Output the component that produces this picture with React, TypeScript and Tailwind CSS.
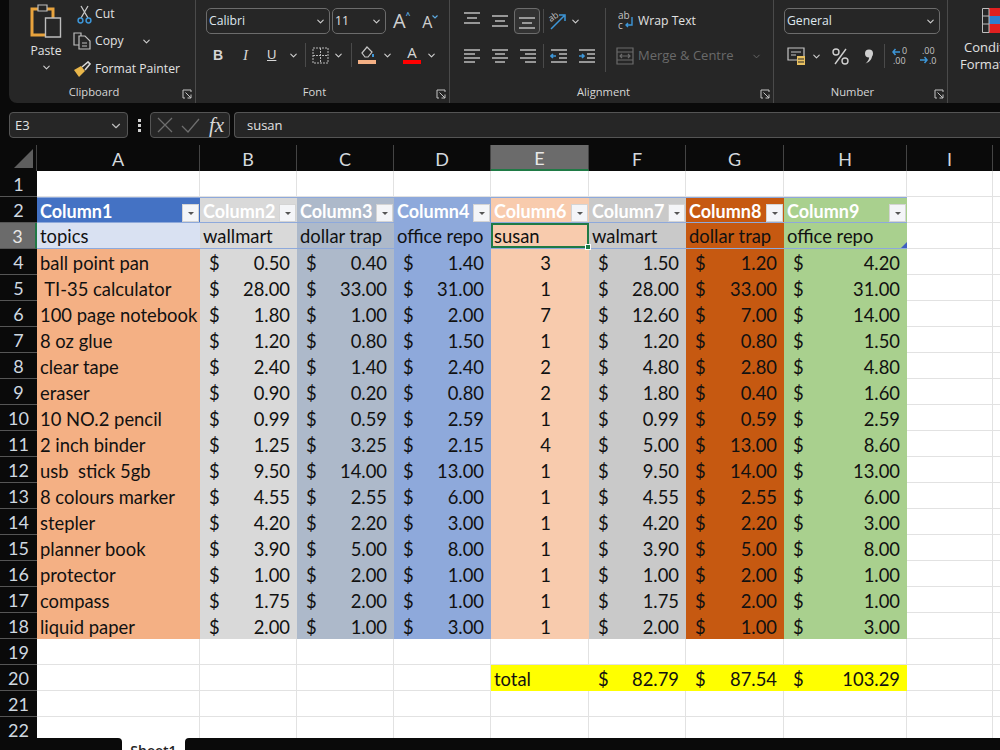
import React from "react";
import { ChevronDown } from "lucide-react";

const widths = [163, 97, 97, 97, 98, 97, 98, 123, 86, 60];
const letters = ["A", "B", "C", "D", "E", "F", "G", "H", "I", "J"];

const colBg = [
  "bg-[#f4b084]",
  "bg-[#d9d9d9]",
  "bg-[#adb9ca]",
  "bg-[#8ea9db]",
  "bg-[#f8cbad]",
  "bg-[#c9c9c9]",
  "bg-[#c65911]",
  "bg-[#a9d08e]",
];

const heads = ["Column1", "Column2", "Column3", "Column4", "Column6", "Column7", "Column8", "Column9"];
const sub = ["topics", "wallmart", "dollar trap", "office repo", "susan", "walmart", "dollar trap", "office repo"];

const rows: string[][] = [
  ["ball point pan", "0.50", "0.40", "1.40", "3", "1.50", "1.20", "4.20"],
  [" TI-35 calculator", "28.00", "33.00", "31.00", "1", "28.00", "33.00", "31.00"],
  ["100 page notebook", "1.80", "1.00", "2.00", "7", "12.60", "7.00", "14.00"],
  ["8 oz glue", "1.20", "0.80", "1.50", "1", "1.20", "0.80", "1.50"],
  ["clear tape", "2.40", "1.40", "2.40", "2", "4.80", "2.80", "4.80"],
  ["eraser", "0.90", "0.20", "0.80", "2", "1.80", "0.40", "1.60"],
  ["10 NO.2 pencil", "0.99", "0.59", "2.59", "1", "0.99", "0.59", "2.59"],
  ["2 inch binder", "1.25", "3.25", "2.15", "4", "5.00", "13.00", "8.60"],
  ["usb  stick 5gb", "9.50", "14.00", "13.00", "1", "9.50", "14.00", "13.00"],
  ["8 colours marker", "4.55", "2.55", "6.00", "1", "4.55", "2.55", "6.00"],
  ["stepler", "4.20", "2.20", "3.00", "1", "4.20", "2.20", "3.00"],
  ["planner book", "3.90", "5.00", "8.00", "1", "3.90", "5.00", "8.00"],
  ["protector", "1.00", "2.00", "1.00", "1", "1.00", "2.00", "1.00"],
  ["compass", "1.75", "2.00", "1.00", "1", "1.75", "2.00", "1.00"],
  ["liquid paper", "2.00", "1.00", "3.00", "1", "2.00", "1.00", "3.00"],
];

const Cell = ({ i, className = "", children }: { i: number; className?: string; children?: React.ReactNode }) => (
  <div
    style={{ width: widths[i] }}
    className={`h-[26px] shrink-0 pt-[3px] border-r border-b border-[#e2e2e2] flex items-center overflow-hidden whitespace-pre ${className}`}
  >
    {children}
  </div>
);

const Money = ({ v }: { v: string }) => (
  <div className="flex w-full justify-between pl-[9px] pr-[7px]">
    <span>$</span>
    <span>{v}</span>
  </div>
);

const RowNum = ({ n, active }: { n: number; active?: boolean }) => (
  <div
    className={`w-[37px] h-[26px] shrink-0 pt-[2px] flex items-center justify-center border-b border-[#555] text-[18px] ${
      active ? "bg-[#6b6b6b] text-[#e8e8e8] border-r-2 border-r-[#1f7a45]" : "bg-[#0a0a0a] text-[#cfd8e0]"
    }`}
  >
    {n}
  </div>
);

const Row = ({ n, active, children }: { n: number; active?: boolean; children: React.ReactNode }) => (
  <div className="flex h-[26px]">
    <RowNum n={n} active={active} />
    {children}
  </div>
);

const BlankCells = ({ from = 0, to }: { from?: number; to?: number }) => (
  <>
    {widths.slice(from, to).map((_, i) => (
      <Cell key={i} i={i + from} />
    ))}
  </>
);

const FilterBtn = () => (
  <div className="absolute right-[1px] top-[6px] w-[17px] h-[18px] bg-[#f4f5f8] border border-[#d4d4d4] flex items-center justify-center">
    <div className="w-0 h-0 border-l-[3px] border-r-[3px] border-t-[3px] border-l-transparent border-r-transparent border-t-[#555]" />
  </div>
);

const AlignIcon = ({ lines }: { lines: [number, number][] }) => (
  <svg width="18" height="16" viewBox="0 0 18 16" stroke="#bdbdbd" strokeWidth="1.5">
    {lines.map(([a, b], i) => (
      <path key={i} d={`M${a} ${2 + i * 4}H${b}`} />
    ))}
  </svg>
);

const VAlign = ({ y }: { y: number }) => (
  <svg width="18" height="18" viewBox="0 0 18 18" stroke="#bdbdbd" strokeWidth="1.5">
    <path d={`M1 ${y}H17M4 ${y + 5}H14M1 ${y + 10}H17`} />
  </svg>
);

const Chev = ({ className = "" }: { className?: string }) => (
  <ChevronDown size={11} strokeWidth={2.4} className={`shrink-0 text-[#cfcfcf] ${className}`} />
);

const Launcher = () => (
  <svg width="10" height="10" viewBox="0 0 10 10" fill="none" stroke="#c4c4c4" strokeWidth="1">
    <path d="M9 3V1H1V9H3" />
    <path d="M3.5 3.5L9 9M9 5.5V9H5.5" />
  </svg>
);

const GroupLabel = ({ children }: { children: React.ReactNode }) => (
  <div className="absolute left-0 right-[16px] bottom-[2px] text-center text-[11.2px] text-[#d6d6d6]">{children}</div>
);

const Divider = ({ className = "" }: { className?: string }) => (
  <div className={`w-px h-[24px] shrink-0 bg-[#4a4a4a] ${className}`} />
);

const Ribbon = () => (
  <div className="h-[103px] ml-[9px] bg-[#262626] rounded-bl-[8px] flex text-[12.2px] text-[#e2e2e2] overflow-hidden font-['Open_Sans',sans-serif]">
    {/* clipboard */}
    <div className="relative w-[187px] shrink-0 border-r border-[#4a4a4a] flex">
      <div className="w-[62px] flex flex-col items-center pl-[12px] pt-[4px]">
        <svg width="32" height="34" viewBox="0 0 32 34" fill="none">
          <path d="M2 5H23V31H2Z" stroke="#e8a33d" strokeWidth="3" />
          <path d="M8 1H17V7H8Z" fill="#262626" stroke="#bdbdbd" strokeWidth="1.2" />
          <path d="M15.5 14H30.5V33H15.5Z" fill="#262626" stroke="#bdbdbd" strokeWidth="1.4" />
        </svg>
        <div className="mt-[4px] leading-[18px]">Paste</div>
        <Chev className="mt-[2px]" />
      </div>
      <div className="flex flex-col pl-[2px] pt-[1px]">
        <div className="h-[26px] flex items-center">
          <div className="w-[22px] flex justify-center">
            <svg width="15" height="19" viewBox="0 0 15 19" fill="none">
              <path d="M4 1L11 13M11 1L4 13" stroke="#c9c9c9" strokeWidth="1.3" />
              <circle cx="3.5" cy="15.5" r="2.4" stroke="#3d96d8" strokeWidth="1.5" />
              <circle cx="11.5" cy="15.5" r="2.4" stroke="#3d96d8" strokeWidth="1.5" />
            </svg>
          </div>
          <span>Cut</span>
        </div>
        <div className="h-[28px] flex items-center">
          <div className="w-[22px]">
            <svg width="18" height="18" viewBox="0 0 18 18" fill="none" stroke="#bdbdbd" strokeWidth="1.2">
              <path d="M6 13H1V1H8V4" />
              <path d="M6 4H12L17 9V17H6Z" />
              <path d="M9 11H14M9 14H14" />
            </svg>
          </div>
          <span>Copy</span>
          <Chev className="ml-[17px]" />
        </div>
        <div className="h-[28px] flex items-center">
          <div className="w-[22px]">
            <svg width="18" height="17" viewBox="0 0 18 17" fill="none">
              <path d="M1 9L8 5L12 10L6 16Z" fill="#e8b64a" />
              <path d="M9 6L15 1L17 3L12 9" stroke="#d8d8d8" strokeWidth="1.6" />
            </svg>
          </div>
          <span>Format Painter</span>
        </div>
      </div>
      <GroupLabel>Clipboard</GroupLabel>
      <div className="absolute right-[3px] bottom-[4px]"><Launcher /></div>
    </div>

    {/* font */}
    <div className="relative w-[254px] shrink-0 border-r border-[#4a4a4a] pl-[10px] pt-[8px]">
      <div className="flex items-center h-[26px]">
        <div className="w-[124px] h-[26px] border border-[#6c6c6c] rounded-[5px] flex items-center justify-between px-[2px] text-[#dfe6ee]">
          <span>Calibri</span>
          <Chev className="mr-[1px]" />
        </div>
        <div className="ml-[2px] w-[54px] h-[26px] border border-[#6c6c6c] rounded-[5px] flex items-center justify-between px-[2px]">
          <span>11</span>
          <Chev className="mr-[1px]" />
        </div>
        <div className="ml-[7px] flex items-start text-[20px] leading-none text-[#cfcfcf]">
          A<span className="text-[8px] text-[#5ca9e0] font-bold">^</span>
        </div>
        <div className="ml-[12px] flex items-start text-[16px] leading-none mt-[2px] text-[#cfcfcf]">
          A
          <svg width="6" height="4" viewBox="0 0 6 4" fill="none" stroke="#5ca9e0" strokeWidth="1.2" className="mt-[1px]">
            <path d="M0.5 0.5L3 3L5.500 0.5" />
          </svg>
        </div>
      </div>
      <div className="flex items-center h-[26px] mt-[8px] text-[#d6d6d6] pl-[7px]">
        <span className="font-bold w-[27px] font-['Liberation_Sans',sans-serif] text-[14px]">B</span>
        <span className="italic w-[27px] pl-[3px] font-['Liberation_Serif',serif] text-[15px]">I</span>
        <span className="underline w-[21px] font-['Liberation_Sans',sans-serif] text-[13px]">U</span>
        <Chev />
        <Divider className="ml-[6px] mr-[6px]" />
        <svg width="17" height="17" viewBox="0 0 17 17" fill="none" stroke="#b8b8b8" strokeWidth="1" strokeDasharray="2 1">
          <path d="M1 1H16V16H1ZM8.5 1V16M1 8.500H16" />
        </svg>
        <Chev className="ml-[4px]" />
        <Divider className="ml-[7px] mr-[6px]" />
        <div className="flex flex-col items-center w-[18px]">
          <svg width="16" height="13" viewBox="0 0 16 13" fill="none" stroke="#c4c4c4" strokeWidth="1.2">
            <path d="M3 7L8 1L13 6L9 11H6Z" />
            <path d="M14 8V11" stroke="#3d96d8" strokeWidth="2" />
          </svg>
          <div className="w-[18px] h-[4px] bg-[#f4b084] mt-[1px]" />
        </div>
        <Chev className="ml-[6px]" />
        <div className="ml-[10px] flex flex-col items-center w-[18px]">
          <span className="text-[15px] leading-[13px]">A</span>
          <div className="w-[18px] h-[4px] bg-[#ff0000] mt-[1px]" />
        </div>
        <Chev className="ml-[5px]" />
      </div>
      <GroupLabel>Font</GroupLabel>
      <div className="absolute right-[3px] bottom-[4px]"><Launcher /></div>
    </div>

    {/* alignment */}
    <div className="relative w-[324px] shrink-0 border-r border-[#4a4a4a] pl-[8px] pt-[8px]">
      <div className="flex items-center h-[26px]">
        <div className="w-[28px] flex justify-center -mt-[4px]"><VAlign y={3} /></div>
        <div className="w-[28px] flex justify-center"><VAlign y={4} /></div>
        <div className="w-[26px] h-[26px] border border-[#6c6c6c] rounded-[4px] bg-[#333] flex items-center justify-center"><VAlign y={6} /></div>
        <Divider className="ml-[3px] mr-[4px]" />
        <svg width="20" height="20" viewBox="0 0 20 20" fill="none">
          <path d="M3 18L16 5M11 4H17V10" stroke="#3d96d8" strokeWidth="1.5" />
          <text x="1" y="10" fontSize="9" fill="#c4c4c4" transform="rotate(-35 4 8)">ab</text>
        </svg>
        <Chev className="ml-[2px]" />
        <div className="w-px h-[64px] shrink-0 bg-[#4a4a4a] ml-[24px] mr-[12px] mt-[38px]" />
        <svg width="17" height="20" viewBox="0 0 17 20" fill="none" className="shrink-0">
          <text x="0" y="8" fontSize="10" fill="#c4c4c4">ab</text>
          <text x="0" y="18" fontSize="10" fill="#c4c4c4">c</text>
          <path d="M14 6V14H8M10 12L8 14L10 16" stroke="#3d96d8" strokeWidth="1.4" />
        </svg>
        <span className="ml-[3px]">Wrap Text</span>
      </div>
      <div className="flex items-center h-[26px] mt-[9px]">
        <div className="w-[28px] flex justify-center"><AlignIcon lines={[[1, 17], [1, 12], [1, 17], [1, 12]]} /></div>
        <div className="w-[28px] flex justify-center"><AlignIcon lines={[[1, 17], [4, 14], [1, 17], [4, 14]]} /></div>
        <div className="w-[28px] flex justify-center"><AlignIcon lines={[[1, 17], [6, 17], [1, 17], [6, 17]]} /></div>
        <Divider className="ml-[1px] mr-[6px]" />
        <svg width="18" height="16" viewBox="0 0 18 16" fill="none" stroke="#bdbdbd" strokeWidth="1.4" className="shrink-0">
          <path d="M1 2H17M9 6H17M9 10H17M1 14H17" />
          <path d="M6 8H1M3 6L1 8L3 10" stroke="#3d96d8" strokeWidth="1.6" />
        </svg>
        <div className="w-[10px] shrink-0" />
        <svg width="18" height="16" viewBox="0 0 18 16" fill="none" stroke="#bdbdbd" strokeWidth="1.4" className="shrink-0">
          <path d="M1 2H17M9 6H17M9 10H17M1 14H17" />
          <path d="M1 8H6M4 6L6 8L4 10" stroke="#3d96d8" strokeWidth="1.6" />
        </svg>
        <div className="w-[20px] shrink-0" />
        <svg width="18" height="18" viewBox="0 0 18 18" fill="none" stroke="#6a6a6a" strokeWidth="1.2" className="shrink-0">
          <path d="M1 1H17V17H1ZM1 5H17M1 13H17M4 9H14M6 7L4 9L6 11M12 7L14 9L12 11" />
        </svg>
        <span className="ml-[4px] text-[13px] text-[#6a6a6a] whitespace-nowrap">Merge &amp; Centre</span>
        <ChevronDown size={11} className="ml-[17px] shrink-0 text-[#6a6a6a]" />
      </div>
      <GroupLabel>Alignment</GroupLabel>
      <div className="absolute right-[3px] bottom-[4px]"><Launcher /></div>
    </div>

    {/* number */}
    <div className="relative w-[174px] shrink-0 border-r border-[#4a4a4a] pl-[10px] pt-[8px]">
      <div className="w-[156px] h-[26px] border border-[#6c6c6c] rounded-[5px] flex items-center justify-between px-[2px] text-[#dfe6ee]">
        <span>General</span>
        <Chev className="mr-[1px]" />
      </div>
      <div className="flex items-center h-[26px] mt-[9px] pl-[3px]">
        <svg width="19" height="19" viewBox="0 0 19 19" fill="none" className="shrink-0">
          <path d="M1 1H17V13H1Z" stroke="#c4c4c4" strokeWidth="1.2" />
          <path d="M4 5H14M4 8H9" stroke="#c4c4c4" strokeWidth="1.2" />
          <path d="M10 9H18V18H10Z" fill="#e8c060" />
          <path d="M11 12H17M11 15H17" stroke="#262626" />
        </svg>
        <Chev className="ml-[5px]" />
        <svg width="17" height="17" viewBox="0 0 17 17" fill="none" stroke="#cfcfcf" strokeWidth="1.4" className="ml-[10px] shrink-0">
          <path d="M14 1L3 16" />
          <circle cx="4" cy="4" r="3" />
          <circle cx="13" cy="13" r="3" />
        </svg>
        <svg width="10" height="15" viewBox="0 0 10 15" className="ml-[15px] shrink-0">
          <circle cx="5" cy="4.500" r="4" fill="#cfcfcf" />
          <path d="M7.500 4C9.500 9 6 13 1.500 14.500C5 11.500 5.500 9 5 6Z" fill="#cfcfcf" />
        </svg>
        <Divider className="ml-[10px] mr-[6px]" />
        <svg width="18" height="18" viewBox="0 0 18 18" fill="none" className="shrink-0">
          <path d="M9 5H2M4.500 2L2 5L4.500 8" stroke="#3d96d8" strokeWidth="1.5" />
          <text x="11" y="7" fontSize="9" fill="#c4c4c4">0</text>
          <text x="2" y="17" fontSize="9" fill="#c4c4c4">.00</text>
        </svg>
        <svg width="18" height="18" viewBox="0 0 18 18" fill="none" className="ml-[10px] shrink-0">
          <text x="3" y="7" fontSize="9" fill="#c4c4c4">.00</text>
          <path d="M1 13H8M5.500 10L8 13L5.500 16" stroke="#3d96d8" strokeWidth="1.5" />
          <text x="10" y="17" fontSize="9" fill="#c4c4c4">.0</text>
        </svg>
      </div>
      <GroupLabel>Number</GroupLabel>
      <div className="absolute right-[3px] bottom-[4px]"><Launcher /></div>
    </div>

    {/* styles */}
    <div className="pt-[8px] flex flex-col leading-[17px] shrink-0 w-[60px] items-start text-[13px]">
      <svg width="32" height="25" viewBox="0 0 32 25" className="shrink-0 ml-[34px]">
        <path d="M7 0H32V25H7Z" fill="#e02020" />
        <path d="M7 8H32V16H7Z" fill="#2f7fd0" />
        <path d="M0.500 0.500H7V24.500H0.500ZM0.500 8H7M0.500 16H7" fill="none" stroke="#bdbdbd" />
      </svg>
      <div className="mt-[6px] ml-[16px] whitespace-nowrap">Condit</div>
      <div className="ml-[12px] whitespace-nowrap">Format</div>
    </div>
  </div>
);

const FormulaBar = () => (
  <div className="h-[42px] flex items-center pl-[9px] pt-[2px] text-[13px] text-[#e2e2e2] font-['Open_Sans',sans-serif]">
    <div className="w-[119px] h-[26px] pt-px bg-[#262626] border border-[#555] rounded-[4px] flex items-center justify-between pl-[5px] pr-[4px]">
      <span>E3</span>
      <ChevronDown size={14} className="text-[#bdbdbd]" />
    </div>
    <div className="w-[22px] flex flex-col items-center gap-[2px]">
      <div className="w-[3px] h-[3px] bg-[#d0d0d0]" />
      <div className="w-[3px] h-[3px] bg-[#d0d0d0]" />
      <div className="w-[3px] h-[3px] bg-[#d0d0d0]" />
    </div>
    <div className="w-[80px] h-[26px] bg-[#262626] border border-[#555] rounded-[4px] flex items-center pl-[6px]">
      <svg width="16" height="16" viewBox="0 0 16 16" fill="none" stroke="#6e6e6e" strokeWidth="1.3">
        <path d="M1 1L15 15M15 1L1 15" />
      </svg>
      <svg width="19" height="15" viewBox="0 0 19 15" fill="none" stroke="#6e6e6e" strokeWidth="1.3" className="ml-[8px]">
        <path d="M1 8L7 14L18 1" />
      </svg>
      <span className="ml-[9px] font-['Liberation_Serif',serif] italic text-[21px] leading-none text-[#d8d8d8]">fx</span>
    </div>
    <div className="ml-[4px] flex-1 h-[26px] pt-px bg-[#262626] border-y border-l border-[#555] rounded-l-[4px] flex items-center pl-[12px]">
      susan
    </div>
  </div>
);

export default function App() {
  return (
    <div className="w-[1000px] h-[750px] flex flex-col overflow-hidden bg-[#0a0a0a] font-['Lato',sans-serif] text-[18.4px] text-[#111]">
      <Ribbon />
      <FormulaBar />

      {/* column headers */}
      <div className="h-[26px] flex shrink-0 text-[18px] text-[#d4d9de]">
        <div className="w-[37px] shrink-0 relative border-r border-[#444]">
          <div className="absolute right-[3px] bottom-[3px] w-0 h-0 border-l-[19px] border-b-[19px] border-l-transparent border-b-[#5e5e5e]" />
        </div>
        {letters.map((l, i) => (
          <div
            key={l}
            style={{ width: widths[i] }}
            className={`shrink-0 pt-[2px] flex items-center justify-center border-r border-[#444] ${
              l === "E" ? "bg-[#6b6b6b] border-b-2 border-b-[#1f7a45] text-[#e8e8e8]" : ""
            }`}
          >
            {l}
          </div>
        ))}
      </div>

      {/* grid */}
      <div className="flex-1 min-h-0 overflow-hidden bg-white">
        <Row n={1}>
          <BlankCells />
        </Row>
        <Row n={2}>
          {heads.map((h, i) => (
            <Cell
              key={h}
              i={i}
              className={`relative font-bold text-[18px] pl-[3px] !border-r-0 border-t border-t-[#8ea9db] !border-b-[#8ea9db] ${
                i === 0 ? "bg-[#4472c4]" : colBg[i]
              } text-white`}
            >
              {h}
              <FilterBtn />
            </Cell>
          ))}
          <BlankCells from={8} />
        </Row>
        <Row n={3} active>
          {sub.map((s, i) => (
            <Cell
              key={s + i}
              i={i}
              className={`relative pl-[3px] !border-r-0 !border-b-[#8ea9db] ${i === 0 ? "bg-[#d9e1f2]" : colBg[i]} ${
                i === 4 ? "!overflow-visible z-10" : ""
              }`}
            >
              {s}
              {i === 4 && (
                <div className="absolute inset-0 border-2 border-[#1f7a45]">
                  <div className="absolute -right-[4px] -bottom-[4px] w-[6px] h-[6px] bg-[#1f7a45] border border-white" />
                </div>
              )}
              {i === 7 && (
                <div className="absolute right-0 bottom-0 w-0 h-0 border-l-[6px] border-b-[6px] border-l-transparent border-b-[#3f5fc0]" />
              )}
            </Cell>
          ))}
          <BlankCells from={8} />
        </Row>
        {rows.map((r, ri) => (
          <Row key={ri} n={ri + 4}>
            {r.map((v, i) => (
              <Cell key={i} i={i} className={`!border-r-0 !border-b-0 ${colBg[i]} ${i === 0 ? "pl-[3px]" : ""}`}>
                {i === 0 ? (
                  v
                ) : i === 4 ? (
                  <div className="w-full text-right pr-[38px]">{v}</div>
                ) : (
                  <Money v={v} />
                )}
              </Cell>
            ))}
            <BlankCells from={8} />
          </Row>
        ))}
        <Row n={19}>
          <BlankCells />
        </Row>
        <Row n={20}>
          <BlankCells to={4} />
          <Cell i={4} className="!border-0 bg-[#ffff00] pl-[3px]">total</Cell>
          <Cell i={5} className="!border-0 bg-[#ffff00]"><Money v="82.79" /></Cell>
          <Cell i={6} className="!border-0 bg-[#ffff00]"><Money v="87.54" /></Cell>
          <Cell i={7} className="!border-0 bg-[#ffff00]"><Money v="103.29" /></Cell>
          <BlankCells from={8} />
        </Row>
        <Row n={21}>
          <BlankCells />
        </Row>
        <Row n={22}>
          <BlankCells />
        </Row>
      </div>

      {/* sheet tabs */}
      <div className="h-[12px] shrink-0 flex bg-white overflow-hidden text-[14px] text-[#222] font-['Open_Sans',sans-serif]">
        <div className="w-[122px] bg-[#0a0a0a] rounded-tr-[4px]" />
        <div className="w-[63px] bg-white text-center leading-[26px] font-semibold">Sheet1</div>
        <div className="flex-1 bg-[#0a0a0a] rounded-tl-[4px]" />
      </div>
    </div>
  );
}
